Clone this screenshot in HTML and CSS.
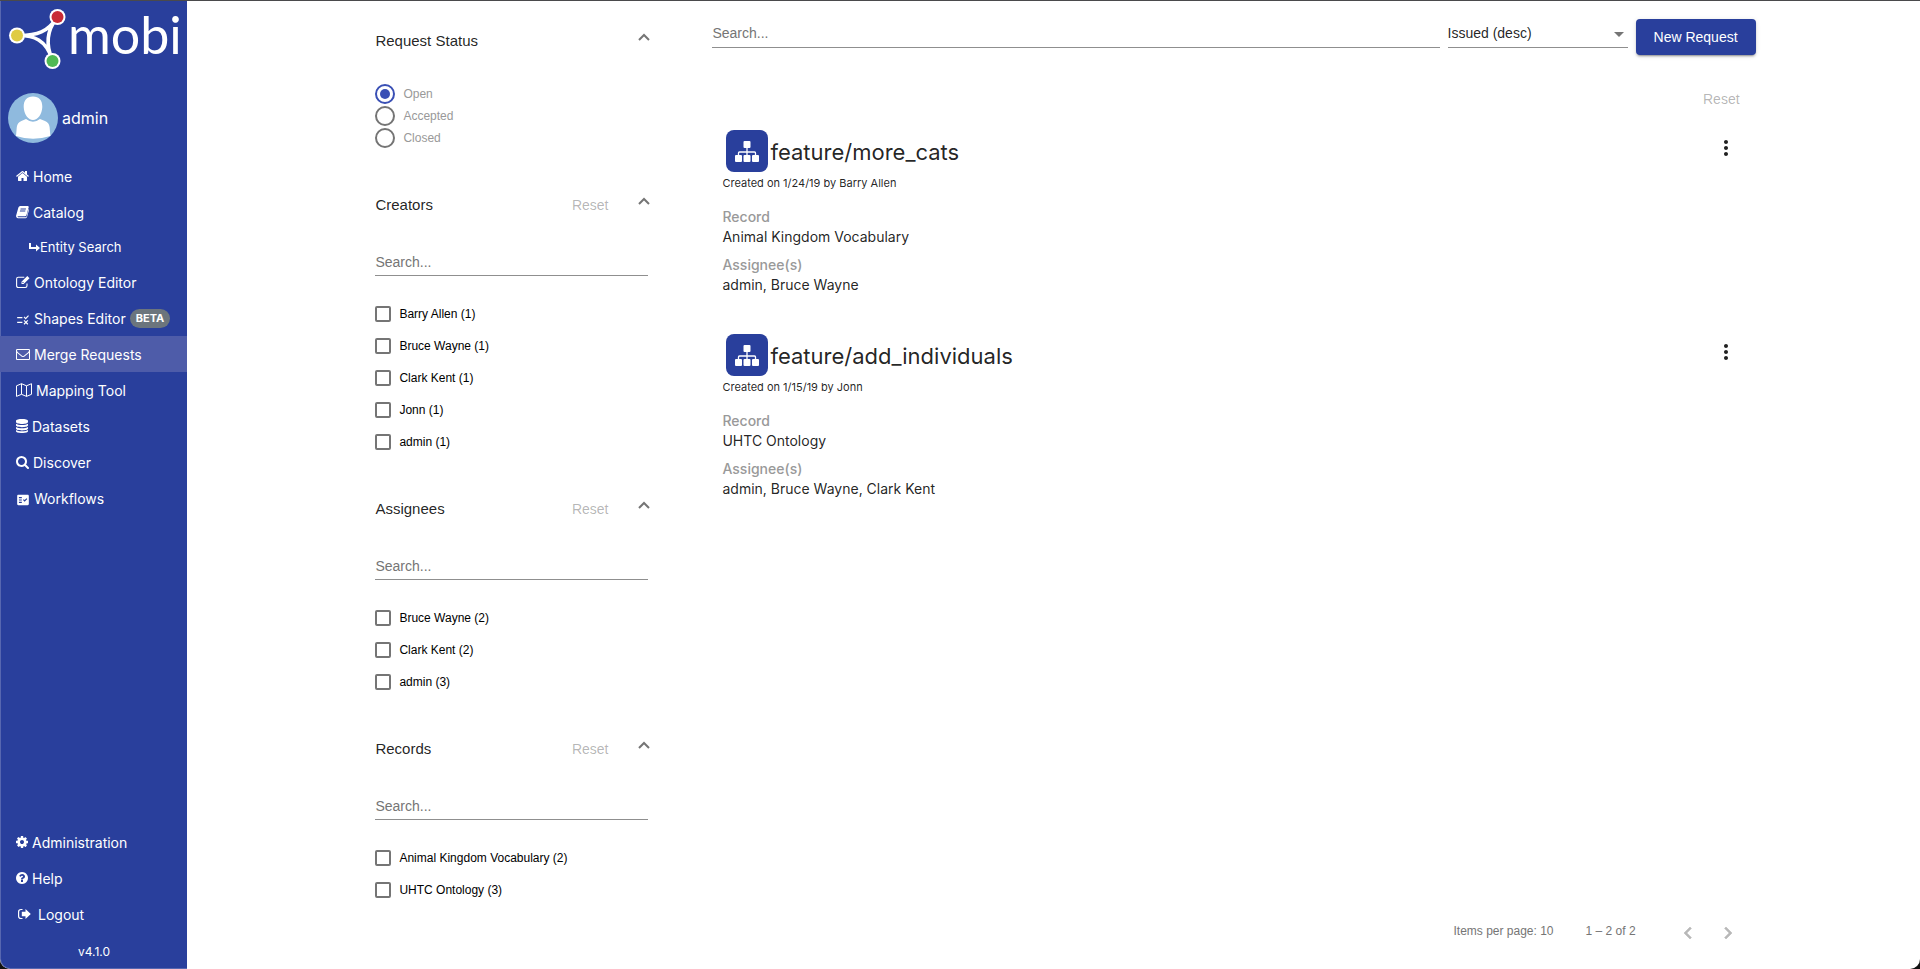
FILE: index.html
```html
<!DOCTYPE html>
<html lang="en">
<head>
<meta charset="utf-8">
<title>Mobi - Merge Requests</title>
<link rel="stylesheet" href="styles.css">
</head>
<body>
<svg class="defs" aria-hidden="true">
  <symbol id="chevron-up" viewBox="0 0 12 8"><path d="M1 7l5-5 5 5" fill="none" stroke="currentColor" stroke-width="2"/></symbol>
  <symbol id="kebab" viewBox="0 0 24 24"><path d="M12 8c1.100 0 2-.9 2-2s-.9-2-2-2-2 .9-2 2 .9 2 2 2zm0 2c-1.100 0-2 .9-2 2s.9 2 2 2 2-.9 2-2-.9-2-2-2zm0 6c-1.100 0-2 .9-2 2s.9 2 2 2 2-.9 2-2-.9-2-2-2z"/></symbol>
  <symbol id="record" viewBox="0 0 42 42"><rect width="42" height="42" rx="8" fill="#293f9c"/><g fill="#fff"><rect x="17.500" y="11" width="7" height="7" rx="1"/><rect x="9" y="25" width="7" height="7" rx="1"/><rect x="17.500" y="25" width="7" height="7" rx="1"/><rect x="26" y="25" width="7" height="7" rx="1"/></g><path d="M21 17v9M12.500 26v-3q0-1 1-1h15q1 0 1 1v3" fill="none" stroke="#fff" stroke-width="1.300"/></symbol>
</svg>
<div class="app">
  <aside class="sidebar">
    <div class="logo">
      <svg class="logo-mark" viewBox="0 0 60 64" aria-hidden="true">
        <path d="M9 28.500C30 29 40 24 48 12M9 28.500C26 28 38 33 44 52M48 12C39 24 38 38 44 52" fill="none" stroke="#fff" stroke-width="3.600"/>
        <circle cx="9" cy="28.500" r="8" fill="#fff"/><circle cx="9" cy="28.500" r="6" fill="#dfcb43"/>
        <circle cx="49.500" cy="10" r="8" fill="#fff"/><circle cx="49.500" cy="10" r="6" fill="#c82b36"/>
        <circle cx="44.500" cy="54" r="8" fill="#fff"/><circle cx="44.500" cy="54" r="6" fill="#4fba53"/>
      </svg>
      <span class="logo-name">mobi</span>
    </div>
    <a class="user" href="#">
      <svg class="avatar" viewBox="0 0 50 50" aria-hidden="true"><circle cx="25" cy="25" r="25" fill="#8fbade"/><path d="M25 3.500c6 0 9.500 4 9.300 10.500-.2 7-4.500 13-9.300 13s-9.100-6-9.300-13C15.500 7.500 19 3.500 25 3.500z" fill="#fff"/><path d="M18 26q7 5.500 14 0l5 2q4 1.500 4.600 6l.8 9Q25 48.500 8 43l.8-9q.6-4.500 4.600-6z" fill="#fff"/></svg>
      <span>admin</span>
    </a>
    <nav class="nav">
      <a href="#"><svg width="13" height="14" viewBox="64 0 1664 1792"><path d="M1472 992v480q0 26-19 45t-45 19h-384v-384h-256v384h-384q-26 0-45-19t-19-45v-480q0-1 .5-3t.5-3l575-474 575 474q1 2 1 6zm223-69l-62 74q-8 9-21 11h-3q-13 0-21-7l-692-577-692 577q-12 8-24 7-13-2-21-11l-62-74q-8-10-7-23.500t11-21.500l719-599q32-26 76-26t76 26l244 204v-195q0-14 9-23t23-9h192q14 0 23 9t9 23v408l219 182q10 8 11 21.500t-7 23.500z"/></svg>Home</a>
      <a href="#"><svg width="13" height="14" viewBox="0 0 13 14"><path d="M4.200 1h7.300q1.500 0 1.200 1.300L10.500 10q-.4 1.200-1.600 1.200H2.500q-1 0-.9.500.1.600 1 .6h7.100q.6 0 .8-.5L12.600 4q.6.400.4 1.100l-2 7q-.4 1.200-1.500 1.200H2.200Q.8 13.300.3 12-.1 11 .2 10.200L2.400 2.500Q2.900 1.200 4.200 1zM4.600 3.500L4.400 4.400h5.400l.2-.9zM4 5.600l-.2.900h5.400l.2-.9z" fill-rule="evenodd"/></svg>Catalog</a>
      <a href="#" class="sub"><svg width="11" height="10" viewBox="0 0 11 10"><path d="M0 1h2v4h5V2.500L11 6 7 9.500V7H0z"/></svg>Entity Search</a>
      <a href="#"><svg width="14" height="14" viewBox="0 0 14 14"><path d="M11 8.500v2.300q0 1.700-1.700 1.700H2.300Q.6 12.500.6 10.800V4Q.6 2.200 2.300 2.200h6" fill="none" stroke="currentColor" stroke-width="1.100"/><path d="M11.300 1l2.200 2.200L7.700 9H5.500V6.800zM6.400 7.200v.9h.9l.5-.5-.9-.9z" fill-rule="evenodd"/></svg>Ontology Editor</a>
      <a href="#"><svg class="low" width="14" height="14" viewBox="0 0 24 24"><path d="M16.540 11L13 7.460l1.410-1.410 2.120 2.120 4.240-4.240 1.410 1.410L16.540 11zM11 7H2v2h9V7zm10 6.410L19.590 12 17 14.590 14.410 12 13 13.410 15.590 16 13 18.590 14.410 20 17 17.410 19.590 20 21 18.590 18.410 16 21 13.410zM11 15H2v2h9v-2z"/></svg>Shapes Editor<span class="beta">BETA</span></a>
      <a href="#" class="active" aria-current="page"><svg width="14" height="14" viewBox="0 0 1792 1792"><path d="M1664 1504v-768q-32 36-69 66-268 206-426 338-51 43-83 67t-86.500 48.500-102.500 24.500h-2q-48 0-102.500-24.500t-86.500-48.500-83-67q-158-132-426-338-37-30-69-66v768q0 13 9.500 22.500t22.500 9.500h1472q13 0 22.500-9.500t9.500-22.500zm0-1051v-24.500l-.5-13-3-12.500-5.500-9-9-7.500-14-2.500h-1472q-13 0-22.500 9.500t-9.500 22.500q0 168 147 284 193 152 401 317 6 5 35 29.500t46 37.500 44.500 31.500 50.500 27.500 43 9h2q20 0 43-9t50.500-27.500 44.500-31.500 46-37.500 35-29.500q208-165 401-317 54-43 100.500-115.500t46.500-131.500zm128-37v1088q0 66-47 113t-113 47h-1472q-66 0-113-47t-47-113v-1088q0-66 47-113t113-47h1472q66 0 113 47t47 113z"/></svg>Merge Requests</a>
      <a href="#"><svg width="16" height="14" viewBox="0 0 16 14"><path d="M.5 2.800L5.500.7l5 2.100 5-2.100v10.600l-5 2.100-5-2.100-5 2.100zM5.500.7v10.600M10.500 2.800v10.600" fill="none" stroke="currentColor" stroke-width="1" stroke-linejoin="round"/></svg>Mapping Tool</a>
      <a href="#"><svg width="12" height="14" viewBox="0 0 12 14"><path d="M0 2c0-2.600 12-2.600 12 0v1c0 2.600-12 2.600-12 0zM0 4.700c2 1.700 10 1.700 12 0v1.600c0 2.500-12 2.500-12 0zM0 7.900c2 1.700 10 1.700 12 0v1.600c0 2.500-12 2.500-12 0zM0 11c2 1.700 10 1.700 12 0v1.300c0 2.300-12 2.300-12 0z"/></svg>Datasets</a>
      <a href="#"><svg width="13" height="14" viewBox="64 0 1664 1792"><path d="M1216 832q0-185-131.500-316.500t-316.500-131.500-316.500 131.500-131.500 316.500 131.500 316.500 316.500 131.500 316.500-131.500 131.500-316.500zm512 832q0 52-38 90t-90 38q-54 0-90-38l-343-342q-179 124-399 124-143 0-273.500-55.500t-225-150-150-225-55.500-273.500 55.500-273.500 150-225 225-150 273.500-55.500 273.500 55.500 225 150 150 225 55.500 273.500q0 220-124 399l343 343q37 37 37 90z"/></svg>Discover</a>
      <a href="#"><svg class="low" width="14" height="14" viewBox="0 0 24 24"><path fill-rule="evenodd" d="M20 3H4c-1.100 0-2 .9-2 2v14c0 1.100.9 2 2 2h16c1.100 0 2-.9 2-2V5c0-1.100-.9-2-2-2zM10 17H5v-2h5v2zm0-4H5v-2h5v2zm0-4H5V7h5v2zm4.820 6L12 12.160l1.410-1.410 1.410 1.420L17.990 9l1.420 1.420L14.820 15z"/></svg>Workflows</a>
    </nav>
    <nav class="nav nav-bottom">
      <a href="#"><svg width="12" height="14" viewBox="128 0 1536 1792"><path d="M1152 896q0-106-75-181t-181-75-181 75-75 181 75 181 181 75 181-75 75-181zm512-109v222q0 12-8 23t-20 13l-185 28q-19 54-39 91 35 50 107 138 10 12 10 25t-9 23q-27 37-99 108t-94 71q-12 0-26-9l-138-108q-44 23-91 38-16 136-29 186-7 28-36 28h-222q-14 0-24.500-8.500t-11.500-21.500l-28-184q-49-16-90-37l-141 107q-10 9-25 9-14 0-25-11-126-114-165-168-7-10-7-23 0-12 8-23 15-21 51-66.500t54-70.500q-27-50-41-99l-183-27q-13-2-21-12.500t-8-23.500v-222q0-12 8-23t19-13l186-28q14-46 39-92-40-57-107-138-10-12-10-24 0-10 9-23 26-36 98.500-107.500t94.500-71.500q13 0 26 10l138 107q44-23 91-38 16-136 29-186 7-28 36-28h222q14 0 24.500 8.500t11.500 21.500l28 184q49 16 90 37l142-107q9-9 24-9 13 0 25 10 129 119 165 170 7 8 7 22 0 12-8 23-15 21-51 66.500t-54 70.500q26 50 41 98l183 28q13 2 21 12.500t8 23.500z"/></svg>Administration</a>
      <a href="#"><svg width="12" height="14" viewBox="128 0 1536 1792"><path d="M1024 1376v-192q0-14-9-23t-23-9h-192q-14 0-23 9t-9 23v192q0 14 9 23t23 9h192q14 0 23-9t9-23zm256-672q0-88-55.500-163t-138.500-116-170-41q-243 0-371 213-15 24 8 42l132 100q7 6 19 6 16 0 25-12 53-68 86-92 34-24 86-24 48 0 85.500 26t37.500 59q0 38-20 61t-68 45q-63 28-115.500 86.500t-52.500 125.500v36q0 14 9 23t23 9h192q14 0 23-9t9-23q0-19 21.500-49.500t54.500-49.500q32-18 49-28.500t46-35 44.500-48 28-60.500 12.500-81zm384 192q0 209-103 385.500t-279.500 279.500-385.500 103-385.500-103-279.500-279.500-103-385.500 103-385.500 279.500-279.500 385.500-103 385.500 103 279.500 279.500 103 385.500z"/></svg>Help</a>
      <a href="#" class="logout"><svg width="13" height="14" viewBox="0 0 13 14"><path d="M4.500 2.500H3Q.6 2.500.6 4.700v4.600q0 2.200 2.400 2.200h1.500" fill="none" stroke="currentColor" stroke-width="1.200"/><path d="M12.800 7L7.500 12V9.300H3.800V4.700h3.700V2z"/></svg>Logout</a>
    </nav>
    <p class="version">v4.1.0</p>
  </aside>

  <main class="main">
    <div class="columns">
      <section class="filters" aria-label="Filters">
        <div class="panel">
          <header class="panel-head"><h2>Request Status</h2><button class="toggle" aria-label="Collapse Request Status"><svg><use href="#chevron-up"/></svg></button></header>
          <div class="radios">
            <label><input type="radio" name="status" checked>Open</label>
            <label><input type="radio" name="status">Accepted</label>
            <label><input type="radio" name="status">Closed</label>
          </div>
        </div>
        <div class="panel">
          <header class="panel-head"><h2>Creators</h2><button class="reset" disabled>Reset</button><button class="toggle" aria-label="Collapse Creators"><svg><use href="#chevron-up"/></svg></button></header>
          <div class="panel-body">
            <input class="field" type="text" placeholder="Search..." aria-label="Search creators">
            <div class="checks">
              <label><input type="checkbox">Barry Allen (1)</label>
              <label><input type="checkbox">Bruce Wayne (1)</label>
              <label><input type="checkbox">Clark Kent (1)</label>
              <label><input type="checkbox">Jonn (1)</label>
              <label><input type="checkbox">admin (1)</label>
            </div>
          </div>
        </div>
        <div class="panel">
          <header class="panel-head"><h2>Assignees</h2><button class="reset" disabled>Reset</button><button class="toggle" aria-label="Collapse Assignees"><svg><use href="#chevron-up"/></svg></button></header>
          <div class="panel-body">
            <input class="field" type="text" placeholder="Search..." aria-label="Search assignees">
            <div class="checks">
              <label><input type="checkbox">Bruce Wayne (2)</label>
              <label><input type="checkbox">Clark Kent (2)</label>
              <label><input type="checkbox">admin (3)</label>
            </div>
          </div>
        </div>
        <div class="panel">
          <header class="panel-head"><h2>Records</h2><button class="reset" disabled>Reset</button><button class="toggle" aria-label="Collapse Records"><svg><use href="#chevron-up"/></svg></button></header>
          <div class="panel-body">
            <input class="field" type="text" placeholder="Search..." aria-label="Search records">
            <div class="checks">
              <label><input type="checkbox">Animal Kingdom Vocabulary (2)</label>
              <label><input type="checkbox">UHTC Ontology (3)</label>
            </div>
          </div>
        </div>
      </section>

      <section class="results" aria-label="Merge requests">
        <div class="toolbar">
          <input class="field search" type="text" placeholder="Search..." aria-label="Search requests">
          <div class="sort">
            <select class="field" aria-label="Sort by"><option>Issued (desc)</option></select>
            <svg class="caret" viewBox="0 0 10 5" aria-hidden="true"><path d="M0 0h10L5 5z"/></svg>
          </div>
          <button class="primary">New Request</button>
        </div>
        <div class="reset-row"><button class="reset" disabled>Reset</button></div>
        <div class="list">
          <article class="request">
            <div class="title-row"><svg class="record-icon"><use href="#record"/></svg><h3>feature/more_cats</h3><button class="more" aria-label="More actions"><svg><use href="#kebab"/></svg></button></div>
            <p class="created">Created on 1/24/19 by Barry Allen</p>
            <dl><dt>Record</dt><dd>Animal Kingdom Vocabulary</dd><dt>Assignee(s)</dt><dd>admin, Bruce Wayne</dd></dl>
          </article>
          <article class="request">
            <div class="title-row"><svg class="record-icon"><use href="#record"/></svg><h3>feature/add_individuals</h3><button class="more" aria-label="More actions"><svg><use href="#kebab"/></svg></button></div>
            <p class="created">Created on 1/15/19 by Jonn</p>
            <dl><dt>Record</dt><dd>UHTC Ontology</dd><dt>Assignee(s)</dt><dd>admin, Bruce Wayne, Clark Kent</dd></dl>
          </article>
        </div>
        <footer class="paginator">
          <span>Items per page: 10</span>
          <span class="range">1 – 2 of 2</span>
          <button disabled aria-label="Previous page"><svg viewBox="0 0 24 24"><path d="M15.410 7.410L14 6l-6 6 6 6 1.410-1.410L10.830 12z" stroke="currentColor" stroke-width=".6"/></svg></button>
          <button disabled aria-label="Next page"><svg viewBox="0 0 24 24"><path d="M10 6L8.590 7.410 13.170 12l-4.580 4.590L10 18l6-6z" stroke="currentColor" stroke-width=".6"/></svg></button>
        </footer>
      </section>
    </div>
  </main>
</div>
</body>
</html>
```

FILE: styles.css
```css
* { box-sizing: border-box; }
html { background: #111; }
body { margin: 0; font-family: "Liberation Sans", Arial, sans-serif; font-size: 14px; color: rgba(0, 0, 0, .87); }
h2, h3, p, dl, dd { margin: 0; font-weight: 400; }
button, input, select { font: inherit; color: inherit; }
button { border: 0; background: none; padding: 0; }
svg { display: block; fill: currentColor; flex: none; }
.defs { display: none; }

.app { display: flex; min-height: 100vh; border-top: 1px solid #4a4a4c; border-radius: 0 0 10px 10px; overflow: hidden; background: #fff; }

/* Sidebar */
.sidebar { width: 187px; flex: none; display: flex; flex-direction: column; background: #293f9c; color: #fff; border-left: 1px solid #5767b0; border-bottom: 1px solid #5767b0; border-bottom-left-radius: 10px; font-family: Inter, sans-serif; }
.logo { display: flex; align-items: flex-start; height: 76px; padding: 6px 0 0 7px; }
.logo-mark { width: 60px; height: 64px; }
.logo-name { font-family: Lato, sans-serif; font-size: 52px; line-height: 54px; }
.user { display: flex; align-items: center; gap: 4px; padding: 16px 7px 15px; font-size: 16px; line-height: 20px; color: inherit; text-decoration: none; }
.avatar { width: 50px; height: 50px; }
.nav a { display: flex; align-items: center; gap: 4px; height: 36px; padding-left: 15px; color: inherit; text-decoration: none; }
.nav .sub { height: 34px; padding-left: 28px; gap: 0; font-size: 13px; }
.nav .active { background: #4e5ca9; margin-left: -1px; padding-left: 16px; }
.nav .low { margin-top: 4px; }
.nav .logout { padding-left: 17px; gap: 7px; }
.beta { padding: 0 6px; border-radius: 10px; background: #6c757d; font-size: 11px; line-height: 19px; font-weight: 700; }
.nav-bottom { margin-top: auto; }
.version { padding: 12px 0 8px; text-align: center; font-size: 12px; line-height: 16px; }

/* Content grid */
.main { flex: 1; min-width: 0; display: flex; justify-content: center; }
.columns { width: 83.333%; display: grid; grid-template-columns: 1fr 3fr; }
.filters { padding: 8px 20px 0; }
.results { padding: 0 20px 10px; display: flex; flex-direction: column; min-width: 0; }

/* Filter panels */
.panel-head { display: flex; align-items: center; height: 64px; padding: 0 22px 0 24px; }
.panel-head h2 { flex: 1; font-size: 15px; line-height: 20px; }
.toggle { margin-left: 14px; padding-bottom: 9px; color: #757575; }
.toggle svg { width: 12px; height: 8px; }
.reset { padding: 0 16px; line-height: 36px; color: rgba(0, 0, 0, .3); }
.radios { padding: 10px 24px 24px; font-size: 12px; color: #999; }
.radios label { display: flex; align-items: center; gap: 8px; height: 22px; }
.radios input { appearance: none; width: 20px; height: 20px; margin: 0; border: 2px solid #757575; border-radius: 50%; background: #fff; }
.radios input:checked { border-color: #3a50b5; padding: 3px; background: #3a50b5 content-box; }
.panel-body { padding: 13px 24px 19px; }
.field { display: block; width: 100%; height: 26px; padding: 0 0 2px; border: 0; border-bottom: 1px solid #8f8f8f; border-radius: 0; background: none; line-height: 20px; }
.field::placeholder { color: #757575; opacity: 1; }
.checks { padding-top: 22px; font-size: 12px; color: #000; }
.checks label { display: flex; align-items: center; gap: 8px; height: 32px; }
.checks input { appearance: none; width: 16px; height: 16px; margin: 0; border: 2px solid #757575; border-radius: 2px; }

/* Results */
.toolbar { display: flex; align-items: flex-start; gap: 8px; padding-top: 18px; }
.toolbar .field { height: 29px; padding-bottom: 1px; }
.toolbar .search { flex: 1; min-width: 0; }
.sort { position: relative; width: 180px; }
.sort select { appearance: none; }
.caret { position: absolute; right: 4px; top: 13px; width: 10px; height: 5px; color: #757575; pointer-events: none; }
.primary { height: 36px; padding: 0 18px; border-radius: 4px; background: #293f9c; color: #fff; font-weight: 500; box-shadow: 0 3px 1px -2px rgba(0, 0, 0, .2), 0 2px 2px rgba(0, 0, 0, .14), 0 1px 5px rgba(0, 0, 0, .12); }
.reset-row { display: flex; justify-content: flex-end; padding-top: 26px; }
.list { flex: 1; font-family: Inter, sans-serif; }
.request { height: 204px; padding: 10px 10px 0; line-height: 20px; }
.title-row { display: flex; align-items: center; gap: 2px; padding-left: 4px; height: 48px; }
.record-icon { width: 42px; height: 42px; }
.title-row h3 { flex: 1; padding-top: 2px; font-size: 22px; line-height: 32px; }
.more { padding: 4px 8px 10px; }
.more svg { width: 24px; height: 24px; }
.created { font-size: 11px; line-height: 16px; }
.request dl { padding-top: 16px; }
.request dt { color: #999; font-weight: 500; }
.request dd { padding-bottom: 8px; }
.paginator { display: flex; align-items: center; justify-content: flex-end; height: 56px; font-size: 12px; color: #757575; }
.range { margin: 0 32px; }
.paginator button { padding: 12px 8px 8px; color: #b8b8b8; }
.paginator button + button { padding-right: 16px; }
.paginator svg { width: 24px; height: 24px; }
```
